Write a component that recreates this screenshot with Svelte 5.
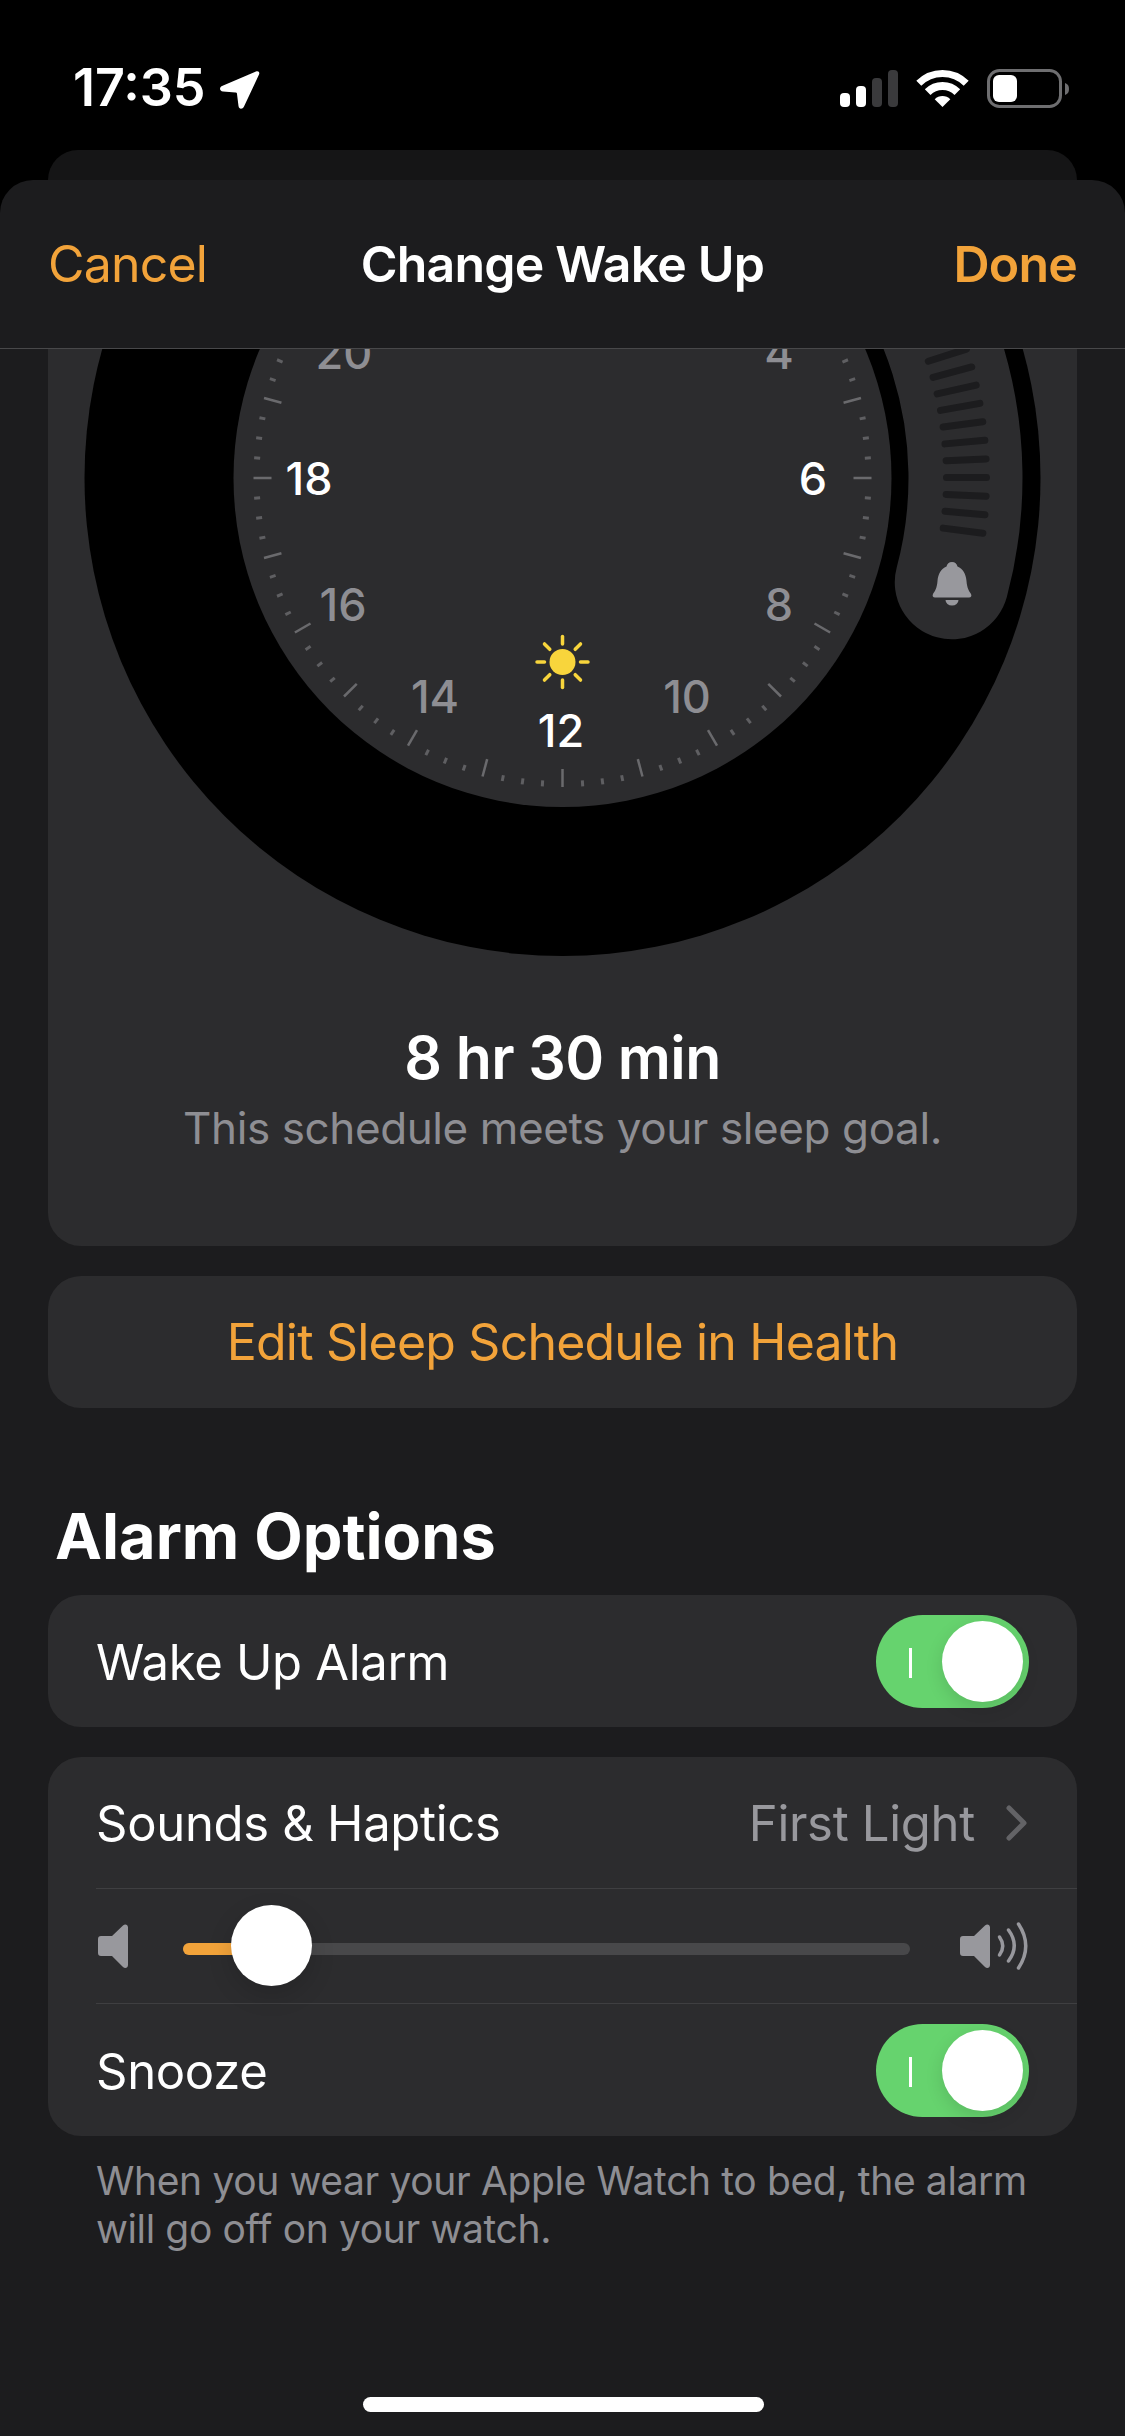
<script>
	// clock centre in page coordinates; the svg viewBox uses the same ones
	const cx = 562.5;
	const cy = 478;

	const polar = (r, deg) => {
		const a = (deg * Math.PI) / 180;
		return [cx + r * Math.cos(a), cy + r * Math.sin(a)];
	};

	const ticks = Array.from({ length: 96 }, (_, i) => {
		const major = i % 4 === 0;
		const deg = i * 3.75;
		const [x1, y1] = polar(major ? 291 : 303, deg);
		const [x2, y2] = polar(309, deg);
		return { x1, y1, x2, y2, major };
	});

	const hours = [
		{ label: '20', x: 344, y: 369 },
		{ label: '4', x: 779, y: 369 },
		{ label: '18', x: 309, y: 495, on: true },
		{ label: '6', x: 813, y: 495, on: true },
		{ label: '16', x: 343, y: 621 },
		{ label: '8', x: 779, y: 621 },
		{ label: '14', x: 435, y: 713 },
		{ label: '10', x: 687, y: 713 },
		{ label: '12', x: 561, y: 747, on: true }
	];

	const sunRays = Array.from({ length: 8 }, (_, i) => i * 45);

	// grip lines on the wake up handle
	const grips = Array.from({ length: 16 }, (_, i) => {
		const deg = 7.5 - i * 2.52;
		const [x1, y1] = polar(384, deg);
		const [x2, y2] = polar(424, deg);
		return { x1, y1, x2, y2 };
	});

	const [hx1, hy1] = polar(403, 15);
	const [hx2, hy2] = polar(403, -50);
</script>

<div class="phone">
	<div class="status">
		<div class="time">
			<span>17:35</span>
			<svg class="arrow" viewBox="218 70 40 39" width="40" height="39">
				<path d="M254 70.5C256.5 69.5 258 71.5 257 73.5L242 105.5C240.5 108.5 237 108.5 236.5 105L235 93C235 92 234.5 91.5 233.5 91.5L221 90.5C217.5 90 217 86.5 220 85Z" fill="#fff" />
			</svg>
		</div>
		<svg class="indicators" viewBox="840 66 232 44" width="232" height="44">
			<rect x="840" y="93" width="10" height="14" rx="4" fill="#fff" />
			<rect x="856" y="86" width="10" height="21" rx="4" fill="#fff" />
			<rect x="872" y="78" width="10" height="29" rx="4" fill="#3a3a3c" />
			<rect x="888" y="70" width="10" height="37" rx="4" fill="#3a3a3c" />
			<path d="M918.8 83.3A33.5 33.5 0 0 1 966.2 83.3" fill="none" stroke="#fff" stroke-width="7" />
			<path d="M927.65 92.15A21 21 0 0 1 957.35 92.15" fill="none" stroke="#fff" stroke-width="8" />
			<path d="M942.5 107L934.7 99.2A11 11 0 0 1 950.3 99.2Z" fill="#fff" />
			<rect x="988.5" y="70.5" width="72" height="36" rx="11" fill="none" stroke="#6e6e70" stroke-width="3" />
			<rect x="993" y="75" width="24" height="27" rx="6" fill="#fff" />
			<path d="M1065 83C1068 84 1069 86 1069 89C1069 92 1068 94 1065 95Z" fill="#6e6e70" />
		</svg>
	</div>

	<div class="behind"></div>

	<div class="sheet">
		<header class="nav">
			<span class="cancel">Cancel</span>
			<span class="title">Change Wake Up</span>
			<span class="done">Done</span>
		</header>

		<div class="content">
			<section class="card clock">
				<svg viewBox="48 349 1029 629" width="1029" height="629">
					<circle cx={cx} cy={cy} r="478" fill="#000" />
					<circle cx={cx} cy={cy} r="329" fill="#2c2c2e" />
					{#each ticks as t}
						<line
							x1={t.x1}
							y1={t.y1}
							x2={t.x2}
							y2={t.y2}
							stroke={t.major ? '#6a6a6d' : '#5f5f62'}
							stroke-width={t.major ? 2.5 : 3}
						/>
					{/each}
					{#each hours as h}
						<text class="hour" class:on={h.on} x={h.x} y={h.y} text-anchor="middle">{h.label}</text>
					{/each}
					<g>
						<circle cx="562.5" cy="662" r="13" fill="#f8d53c" />
						{#each sunRays as deg}
							<line
								x1="562.5"
								y1="644"
								x2="562.5"
								y2="636.5"
								stroke="#f8d53c"
								stroke-width="3.5"
								stroke-linecap="round"
								transform="rotate({deg} 562.5 662)"
							/>
						{/each}
					</g>
					<path
						d="M{hx1} {hy1}A403 403 0 0 0 {hx2} {hy2}"
						fill="none"
						stroke="#2c2c2e"
						stroke-width="114"
						stroke-linecap="round"
					/>
					{#each grips as g}
						<line
							x1={g.x1}
							y1={g.y1}
							x2={g.x2}
							y2={g.y2}
							stroke="#1c1c1e"
							stroke-width="7"
							stroke-linecap="round"
						/>
					{/each}
					<path
						d="M952 562c-3 0-5 2-5.500 4.500C941 569 938 574 937.500 581C937 588 935 591 933 594c-1 2 0 3.500 2 3.500h34c2 0 3-1.500 2-3.500C969 591 967 588 966.500 581C966 574 963 569 957.500 566.500C957 564 955 562 952 562Z"
						fill="#98989d"
					/>
					<path d="M945.500 600h13a6.500 5.500 0 0 1-13 0Z" fill="#98989d" />
				</svg>
				<div class="summary">
					<div class="duration">8 hr 30 min</div>
					<div class="goal">This schedule meets your sleep goal.</div>
				</div>
			</section>

			<button class="card edit">Edit Sleep Schedule in Health</button>

			<h2>Alarm Options</h2>

			<section class="card single">
				<div class="row">
					<span>Wake Up Alarm</span>
					<div class="switch"><i></i><b></b></div>
				</div>
			</section>

			<section class="card options">
				<div class="row sounds">
					<span>Sounds &amp; Haptics</span>
					<div class="value">
						<span>First Light</span>
						<svg viewBox="0 0 24 38" width="24" height="38">
							<path d="M4 4L19 19L4 34" fill="none" stroke="#636366" stroke-width="5" stroke-linecap="round" stroke-linejoin="round" />
						</svg>
					</div>
				</div>
				<div class="volume">
					<svg class="quiet" viewBox="98 1923 30 48" width="30" height="48">
						<path d="M101 1937h11L123 1926.500c2-2 5-1 5 2V1966c0 3-3 4-5 2L112 1957h-11c-2 0-3-1-3-3v-14c0-2 1-3 3-3Z" fill="#98989d" />
					</svg>
					<div class="track">
						<div class="fill"></div>
						<div class="thumb"></div>
					</div>
					<svg class="loud" viewBox="960 1922 70 50" width="70" height="50">
						<path d="M963 1937h11L985 1926.500c2-2 5-1 5 2V1966c0 3-3 4-5 2L974 1957h-11c-2 0-3-1-3-3v-14c0-2 1-3 3-3Z" fill="#98989d" />
						<g fill="none" stroke="#98989d" stroke-width="3.500" stroke-linecap="round">
							<path d="M999.500 1938Q1006 1947 999.500 1956" />
							<path d="M1008.500 1931Q1020 1946.500 1008.500 1962" />
							<path d="M1018.500 1925Q1033 1947 1018.500 1969" />
						</g>
					</svg>
				</div>
				<div class="row snooze">
					<span>Snooze</span>
					<div class="switch"><i></i><b></b></div>
				</div>
			</section>

			<p class="note">When you wear your Apple Watch to bed, the alarm will go off on your watch.</p>
		</div>

		<div class="home"></div>
	</div>
</div>

<style>
	:global(body) {
		margin: 0;
		background: #000;
	}

	.phone {
		width: 1125px;
		height: 2436px;
		overflow: hidden;
		background: #000;
		color: #fff;
		font-family: Inter, 'Liberation Sans', sans-serif;
	}

	.status {
		height: 150px;
		box-sizing: border-box;
		display: flex;
		justify-content: space-between;
		align-items: flex-start;
		padding: 66px 53px 0 73px;
	}

	.time {
		display: flex;
		align-items: center;
		gap: 14px;
		font-size: 52px;
		font-weight: 600;
		line-height: 44px;
	}

	.time svg {
		display: block;
		margin-top: 4px;
	}

	.indicators {
		display: block;
	}

	.behind {
		height: 30px;
		margin: 0 48px;
		background: #151516;
		border-radius: 30px 30px 0 0;
	}

	.sheet {
		position: relative;
		height: 2256px;
		background: #1c1c1e;
		border-radius: 33px 33px 0 0;
		overflow: hidden;
	}

	.nav {
		height: 169px;
		box-sizing: border-box;
		display: grid;
		grid-template-columns: 1fr auto 1fr;
		align-items: center;
		padding: 0 48px;
		border-bottom: 1px solid #48484a;
		font-size: 50px;
		letter-spacing: -0.8px;
	}

	.cancel {
		color: #f2a33a;
	}

	.title {
		font-weight: 600;
	}

	.done {
		justify-self: end;
		color: #f2a33a;
		font-weight: 600;
	}

	.content {
		padding: 0 48px;
	}

	.card {
		background: #2c2c2e;
		border-radius: 33px;
	}

	.clock {
		height: 897px;
		border-radius: 0 0 33px 33px;
		overflow: hidden;
	}

	.clock svg {
		display: block;
	}

	.hour {
		font-size: 45px;
		font-weight: 500;
		fill: #8e8e93;
	}

	.hour.on {
		fill: #fff;
	}

	.summary {
		padding-top: 44px;
		text-align: center;
	}

	.duration {
		font-size: 59px;
		line-height: 72px;
		font-weight: 600;
		letter-spacing: -0.6px;
	}

	.goal {
		margin-top: 7px;
		font-size: 44px;
		line-height: 54px;
		letter-spacing: -0.4px;
		color: #8e8e93;
	}

	.edit {
		display: block;
		width: 100%;
		height: 132px;
		margin-top: 30px;
		padding: 0;
		border: 0;
		font: inherit;
		font-size: 50px;
		letter-spacing: -0.8px;
		color: #f2a33a;
	}

	h2 {
		margin: 0;
		padding: 93px 0 23px 7px;
		height: 71px;
		font-size: 63px;
		line-height: 71px;
		font-weight: 700;
	}

	.row {
		display: flex;
		justify-content: space-between;
		align-items: center;
		height: 132px;
		padding: 0 48px;
		font-size: 49px;
		letter-spacing: -0.3px;
	}

	.row > span {
		padding-top: 2px;
	}

	.switch {
		position: relative;
		width: 153px;
		height: 93px;
		border-radius: 47px;
		background: #66d36e;
	}

	.switch i {
		position: absolute;
		left: 33px;
		top: 33px;
		width: 2.5px;
		height: 30px;
		background: #fff;
	}

	.switch b {
		position: absolute;
		right: 6px;
		top: 6px;
		width: 81px;
		height: 81px;
		border-radius: 50%;
		background: #fff;
		box-shadow: 0 6px 18px rgba(0, 0, 0, 0.12);
	}

	.options {
		margin-top: 30px;
		height: 379px;
		display: flex;
		flex-direction: column;
	}

	.sounds {
		height: 131px;
	}

	.value {
		display: flex;
		align-items: center;
		gap: 30px;
		color: #98989d;
	}

	.value span {
		padding-top: 2px;
	}

	.value svg {
		display: block;
	}

	.volume {
		display: flex;
		align-items: center;
		height: 114px;
		margin-left: 48px;
		border-top: 1px solid #3f3f41;
		border-bottom: 1px solid #3f3f41;
	}

	.quiet {
		display: block;
		margin-left: 2px;
	}

	.track {
		position: relative;
		width: 727px;
		height: 12px;
		margin-left: 55px;
		margin-top: 5px;
		border-radius: 6px;
		background: #48484a;
	}

	.fill {
		width: 60px;
		height: 100%;
		border-radius: 6px 0 0 6px;
		background: #f2a33a;
	}

	.thumb {
		position: absolute;
		left: 48px;
		top: -38px;
		width: 81px;
		height: 81px;
		border-radius: 50%;
		background: #fff;
		box-shadow: 0 9px 24px rgba(0, 0, 0, 0.15);
	}

	.loud {
		display: block;
		margin-left: 50px;
	}

	.snooze {
		height: 132px;
	}

	.note {
		margin: 21px 0 0;
		padding: 0 48px;
		font-size: 39px;
		line-height: 48px;
		letter-spacing: -0.37px;
		color: #8e8e93;
	}

	.home {
		position: absolute;
		left: 362.5px;
		top: 2217px;
		width: 401px;
		height: 15px;
		border-radius: 8px;
		background: #fff;
	}
</style>
